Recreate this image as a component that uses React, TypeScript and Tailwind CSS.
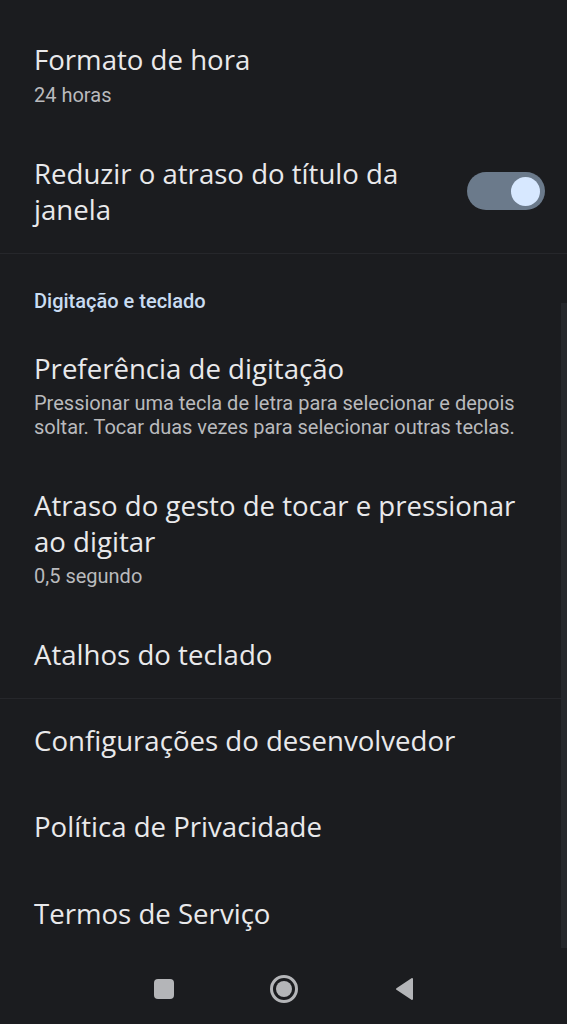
import React from "react";

const titleCls = "text-[27.6px] leading-[36px] text-[#e9e9eb] font-['Open_Sans',sans-serif]";
const subCls = "text-[20px] leading-[24px] text-[#b9babd] font-['Roboto',sans-serif]";

export default function App() {
  return (
    <div className="relative w-[567px] h-[1024px] bg-[#1b1c1f] overflow-hidden flex flex-col">
      {/* scrollbar */}
      <div className="absolute right-0 top-[303px] w-[6px] h-[645px] bg-[#25272b]" />

      <div className="px-[34px] pt-[41px]">
        <div className={titleCls}>Formato de hora</div>
        <div className={`${subCls} mt-[6px]`}>24 horas</div>
      </div>

      <div className="pl-[34px] pr-[22px] mt-[48px] flex items-center justify-between">
        <div className={`${titleCls} leading-[35px] w-[400px]`}>
          Reduzir o atraso do título da janela
        </div>
        <div className="w-[78px] h-[38px] rounded-full bg-[#6b7a8b] flex items-center justify-end pr-[5px]">
          <div className="w-[29px] h-[29px] rounded-full bg-[#d7e8ff]" />
        </div>
      </div>

      <div className="mt-[26px] h-[1px] bg-[#26272b]" />

      <div className="px-[34px] mt-[35px] text-[20px] leading-[24px] font-medium text-[#c9dcf2] font-['Roboto',sans-serif]">
        Digitação e teclado
      </div>

      <div className="px-[34px] mt-[37px]">
        <div className={titleCls}>Preferência de digitação</div>
        <div className={`${subCls} leading-[23px] mt-[5px]`}>
          Pressionar uma tecla de letra para selecionar e depois soltar. Tocar duas vezes para selecionar outras teclas.
        </div>
      </div>

      <div className="px-[34px] mt-[48px]">
        <div className={`${titleCls} leading-[35px]`}>
          Atraso do gesto de tocar e pressionar ao digitar
        </div>
        <div className={`${subCls} mt-[5px]`}>0,5 segundo</div>
      </div>

      <div className="px-[34px] mt-[48px]">
        <div className={titleCls}>Atalhos do teclado</div>
      </div>

      <div className="mt-[26px] h-[1px] bg-[#26272b]" />

      <div className="px-[34px] mt-[23px]">
        <div className={titleCls}>Configurações do desenvolvedor</div>
      </div>
      <div className="px-[34px] mt-[50px]">
        <div className={titleCls}>Política de Privacidade</div>
      </div>
      <div className="px-[34px] mt-[51px]">
        <div className={titleCls}>Termos de Serviço</div>
      </div>

      <div className="mt-auto h-[68px] flex items-center justify-center gap-[96px] pb-[2px]">
        <div className="w-[20px] h-[20px] rounded-[4px] bg-[#b4b5b8]" />
        <div className="w-[28px] h-[28px] rounded-full border-[3px] border-[#b4b5b8] flex items-center justify-center">
          <div className="w-[16px] h-[16px] rounded-full bg-[#b4b5b8]" />
        </div>
        <svg width="20" height="24" viewBox="0 0 20 24">
          <path d="M18 2 L3 12 L18 22 Z" fill="#b4b5b8" stroke="#b4b5b8" strokeWidth="2" strokeLinejoin="round" />
        </svg>
      </div>
    </div>
  );
}
